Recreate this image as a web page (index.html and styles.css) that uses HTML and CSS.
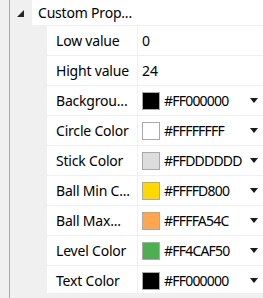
FILE: index.html
```html
<!DOCTYPE html>
<html lang="en">
<head>
  <meta charset="UTF-8" />
  <title>Property Grid</title>
  <link rel="stylesheet" href="styles.css">
</head>
<body>

<div class="panel">
  <div class="gutter"></div>
  <div class="tree">
    <div class="category">
      <div class="expander">
        <svg width="7" height="7" viewBox="0 0 7 7"><polygon points="7,0 7,7 0,7" fill="#262626"/></svg>
      </div>
      <div class="cat-name">Custom Prop...</div>
      <div class="cat-rest"></div>
    </div>

    <div class="prop">
      <div class="name">Low value</div>
      <div class="value">0</div>
    </div>
    <div class="prop">
      <div class="name">Hight value</div>
      <div class="value">24</div>
    </div>
    <div class="prop">
      <div class="name">Backgrou...</div>
      <div class="value color"><span class="swatch" style="background:#000000"></span><span class="hex">#FF000000</span><span class="drop"><svg width="8" height="5" viewBox="0 0 8 5"><polygon points="0,0 8,0 4,5" fill="#1a1a1a"/></svg></span></div>
    </div>
    <div class="prop">
      <div class="name">Circle Color</div>
      <div class="value color"><span class="swatch" style="background:#ffffff"></span><span class="hex">#FFFFFFFF</span><span class="drop"><svg width="8" height="5" viewBox="0 0 8 5"><polygon points="0,0 8,0 4,5" fill="#1a1a1a"/></svg></span></div>
    </div>
    <div class="prop">
      <div class="name">Stick Color</div>
      <div class="value color"><span class="swatch" style="background:#dddddd"></span><span class="hex">#FFDDDDDD</span><span class="drop"><svg width="8" height="5" viewBox="0 0 8 5"><polygon points="0,0 8,0 4,5" fill="#1a1a1a"/></svg></span></div>
    </div>
    <div class="prop">
      <div class="name">Ball Min C...</div>
      <div class="value color"><span class="swatch" style="background:#ffd800"></span><span class="hex">#FFFFD800</span><span class="drop"><svg width="8" height="5" viewBox="0 0 8 5"><polygon points="0,0 8,0 4,5" fill="#1a1a1a"/></svg></span></div>
    </div>
    <div class="prop">
      <div class="name">Ball Max...</div>
      <div class="value color"><span class="swatch" style="background:#ffa54c"></span><span class="hex">#FFFFA54C</span><span class="drop"><svg width="8" height="5" viewBox="0 0 8 5"><polygon points="0,0 8,0 4,5" fill="#1a1a1a"/></svg></span></div>
    </div>
    <div class="prop">
      <div class="name">Level Color</div>
      <div class="value color"><span class="swatch" style="background:#4caf50"></span><span class="hex">#FF4CAF50</span><span class="drop"><svg width="8" height="5" viewBox="0 0 8 5"><polygon points="0,0 8,0 4,5" fill="#1a1a1a"/></svg></span></div>
    </div>
    <div class="prop">
      <div class="name">Text Color</div>
      <div class="value color"><span class="swatch" style="background:#000000"></span><span class="hex">#FF000000</span><span class="drop"><svg width="8" height="5" viewBox="0 0 8 5"><polygon points="0,0 8,0 4,5" fill="#1a1a1a"/></svg></span></div>
    </div>
  </div>
</div>

</body>
</html>
```

FILE: styles.css
```css
* { box-sizing: border-box; }
body, html {
  margin: 0; padding: 0; height: 100%;
  font-family: "Noto Sans", "Open Sans", sans-serif;
  font-size: 14px;
  color: #000;
  background: #f0f0f0;
}
.panel {
  display: flex;
  height: 298px;
  background: #f0f0f0;
}
.gutter {
  width: 10px;
  border-right: 1px solid #a9a9a9;
}
.tree {
  flex: 1;
  display: flex;
  flex-direction: column;
  gap: 1px;
  height: 293px;
  overflow: hidden;
}
.category {
  display: grid;
  grid-template-columns: 21px 106px 1fr;
  column-gap: 1px;
  height: 25px;
  flex-shrink: 0;
}
.expander {
  display: flex;
  align-items: center;
  padding-left: 7px;
  padding-top: 1px;
}
.cat-name {
  background: #fff;
  padding-left: 6px;
  display: flex;
  align-items: center;
  white-space: nowrap;
  margin-right: -1px;
  letter-spacing: -0.2px;
}
.cat-rest {
  background: #fff;
}
.prop {
  display: grid;
  grid-template-columns: 90px 1fr;
  column-gap: 1px;
  padding-left: 37px;
  height: 29px;
  flex-shrink: 0;
}
.name {
  background: #fff;
  padding-left: 9px;
  display: flex;
  align-items: center;
  white-space: nowrap;
  overflow: hidden;
  letter-spacing: -0.2px;
}
.value {
  background: #fff;
  padding-left: 4px;
  display: flex;
  align-items: center;
  white-space: nowrap;
}
.swatch {
  width: 18px;
  height: 18px;
  border: 1px solid #a9a9a9;
  flex-shrink: 0;
}
.hex {
  margin-left: 4px;
  letter-spacing: -0.8px;
}
.drop {
  margin-left: auto;
  margin-right: 5px;
  display: flex;
  align-items: center;
}
```
